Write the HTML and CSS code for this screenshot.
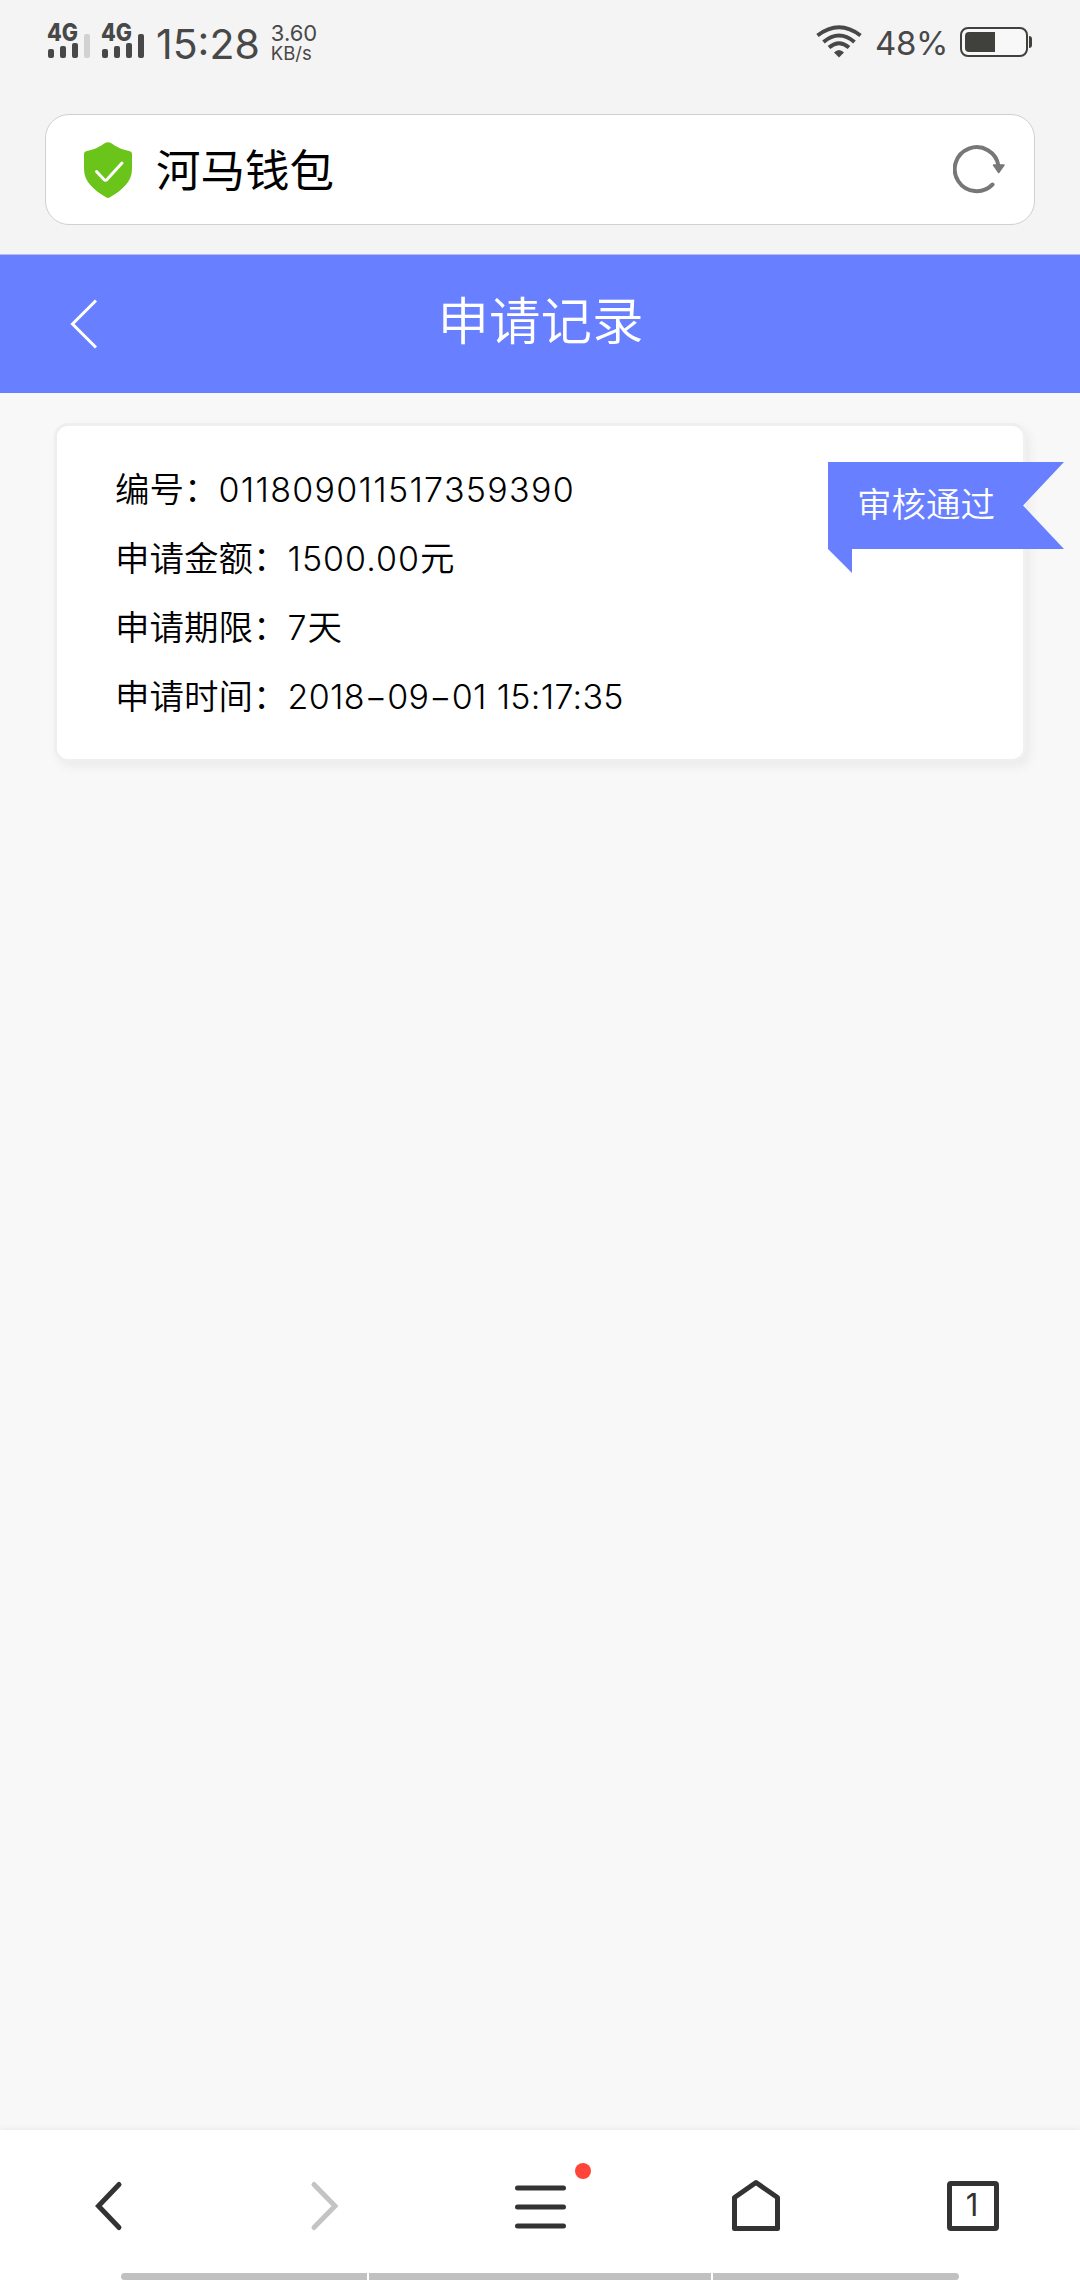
FILE: index.html
```html
<!DOCTYPE html>
<html lang="zh-CN">
<head>
    <meta charset="UTF-8">
    <meta name="viewport" content="width=device-width, initial-scale=1.0">
    <title>申请记录</title>
    <link rel="stylesheet" href="styles.css">
</head>
<body>
    <div class="page">
        <div class="status">
            <svg class="signal" width="100" height="60" viewBox="0 0 100 60">
                <g fill="#484848">
                    <rect x="0" y="49" width="6" height="9" rx="2"/>
                    <rect x="12" y="46" width="6" height="12" rx="2"/>
                    <rect x="24" y="43" width="6" height="15" rx="2"/>
                    <rect x="54" y="49" width="6" height="9" rx="2"/>
                    <rect x="66" y="46" width="6" height="12" rx="2"/>
                    <rect x="78" y="43" width="6" height="15" rx="2"/>
                    <rect x="90" y="34" width="6" height="24" rx="2"/>
                </g>
                <rect x="36" y="34" width="6" height="24" rx="2" fill="#d2d2d2"/>
                <text class="net" x="-1" y="41" textLength="31" lengthAdjust="spacingAndGlyphs">4G</text>
                <text class="net" x="53" y="41" textLength="31" lengthAdjust="spacingAndGlyphs">4G</text>
            </svg>
            <span class="time">15:28</span>
            <div class="speed">
                <span class="speed-num">3.60</span>
                <span class="speed-unit">KB/s</span>
            </div>
            <svg class="wifi" width="46" height="34" viewBox="0 0 46 34">
                <g fill="none" stroke="#484848" stroke-width="4">
                    <path d="M1.5 10.5Q23 -6 44.5 10.5"/>
                    <path d="M7.5 17Q23 4 38.500 17"/>
                    <path d="M13 22.500Q23 14 33 22.500"/>
                </g>
                <path d="M18 27.500Q23 22.500 28 27.500L23 32.500Z" fill="#484848"/>
            </svg>
            <span class="percent">48%</span>
            <svg class="battery" width="73" height="30" viewBox="0 0 73 30">
                <rect x="1" y="1" width="66" height="28" rx="7" fill="#f8f8f8" stroke="#40403c" stroke-width="2"/>
                <path d="M9 5H35V25H9Q5 25 5 21V9Q5 5 9 5Z" fill="#40403c"/>
                <path d="M69 9Q72 9 72 12V18Q72 21 69 21Z" fill="#40403c"/>
            </svg>
        </div>

        <div class="address">
            <svg width="48" height="56" viewBox="0 0 48 56">
                <path d="M21.500 .8Q24 -.5 26.500 .8C32 4.500 37 7.500 45 9Q48 9.500 48 12V27C48 40 38 48 26 55.300Q24 56.500 22 55.300C10 48 0 40 0 27V12Q0 9.500 3 9C11 7.500 16 4.500 21.500 .8Z" fill="#6ac419"/>
                <path d="M12.500 29.500L20 37.500Q21.500 39 23 37.500L38 21" fill="none" stroke="#fff" stroke-width="3" stroke-linecap="round"/>
            </svg>
            <span class="site">河马钱包</span>
            <svg class="refresh" width="52" height="50" viewBox="0 0 52 50">
                <path d="M39.500 39.500A22 22 0 1 1 45.500 21" fill="none" stroke="#777" stroke-width="4" stroke-linecap="round"/>
                <path d="M40.500 20H51L45.700 27.500Z" fill="#777" stroke="#777" stroke-width="1.500" stroke-linejoin="round"/>
            </svg>
        </div>

        <div class="header">
            <svg class="back" width="28" height="50" viewBox="0 0 28 50">
                <path d="M26 1.500L2.500 25L26 48.500" fill="none" stroke="#fff" stroke-width="3"/>
            </svg>
            <h1>申请记录</h1>
        </div>

        <div class="content">
            <div class="card">
                <p>编号：<span class="num no">011809011517359390</span></p>
                <p>申请金额：<span class="num">1500.00</span>元</p>
                <p>申请期限：<span class="num">7</span>天</p>
                <p>申请时间：<span class="num date">2018−09−01 15:17:35</span></p>
                <div class="badge">审核通过</div>
            </div>
        </div>

        <div class="nav">
            <svg width="60" height="60" viewBox="0 0 60 60">
                <path d="M41 8.500L20.500 30L41 51.500" fill="none" stroke="#333" stroke-width="5" stroke-linecap="round"/>
            </svg>
            <svg width="60" height="60" viewBox="0 0 60 60">
                <path d="M20 8.500L41 30L20 51.500" fill="none" stroke="#c4c4c4" stroke-width="5" stroke-linecap="round"/>
            </svg>
            <div class="menu">
                <svg width="60" height="60" viewBox="0 0 60 60">
                    <path d="M7.500 12H53.500M7.500 31H53.500M7.500 50H53.500" fill="none" stroke="#333" stroke-width="5" stroke-linecap="round"/>
                </svg>
                <span class="dot"></span>
            </div>
            <svg width="60" height="60" viewBox="0 0 60 60">
                <path d="M30 6.500L51.500 21.500V52.500H8.500V21.500Z" fill="none" stroke="#333" stroke-width="5" stroke-linejoin="round"/>
            </svg>
            <div class="tabs">1</div>
        </div>
        <div class="gesture"><i></i><i></i><i></i></div>
    </div>
</body>
</html>
```

FILE: styles.css
```css
body {
    margin: 0;
    font-family: "Inter", "Noto Sans CJK SC", sans-serif;
    color: #000;
    background-color: #f8f8f8;
}

svg {
    display: block;
}

.page {
    display: flex;
    flex-direction: column;
    height: 2280px;
    overflow: hidden;
}

.status {
    display: flex;
    height: 84px;
    padding: 0 47px 0 48px;
    color: #484848;
    background-color: #f4f4f4;
}

.signal {
    overflow: visible;
}

.net {
    font-size: 24px;
    font-weight: 800;
    fill: #484848;
}

.time {
    margin-left: 8px;
    line-height: 88px;
    font-size: 41px;
    font-weight: 400;
}

.speed {
    display: flex;
    flex-direction: column;
    margin-left: 11px;
    padding-top: 22px;
}

.speed-num {
    font-size: 22px;
    line-height: 22px;
}

.speed-unit {
    font-size: 18.500px;
    line-height: 19px;
}

.wifi {
    margin: 25px 13px 0 auto;
}

.percent {
    line-height: 87px;
    font-size: 33px;
    letter-spacing: -.4px;
    margin-right: 12px;
}

.battery {
    margin-top: 27px;
}

.address {
    display: flex;
    align-items: center;
    height: 109px;
    padding: 0 29px 0 38px;
    border: 1px solid #d0d0d0;
    border-radius: 24px;
    background-color: #fff;
    margin: 30px 45px 29px;
    box-shadow: 0 0 0 100px #f4f4f4;
    clip-path: inset(-30px -45px -29px -45px);
}

.site {
    margin: 3px 0 0 24px;
    font-size: 44.500px;
    line-height: 60px;
}

.refresh {
    margin-left: auto;
}

.header {
    display: flex;
    align-items: center;
    height: 138px;
    padding: 0 70px;
    border-top: 1px solid #b4bcec;
    color: #fff;
    background-color: #6880ff;
}

.back {
    margin-bottom: 1px;
}

h1 {
    flex: 1;
    margin: 0 27px 6px 0;
    text-align: center;
    font-size: 51.500px;
    font-weight: 350;
    line-height: 70px;
}

.content {
    flex: 1;
    padding: 30px 54px;
}

.card {
    position: relative;
    padding: 29px 58px 28px;
    border: 3px solid #efefef;
    border-right-color: #f1f1f1;
    border-radius: 14px;
    background-color: #fff;
    box-shadow: 4px 5px 10px #ebebeb;
}

.card p {
    margin: 0;
    height: 69px;
    line-height: 69px;
    font-size: 34.500px;
    font-weight: 350;
    white-space: nowrap;
}

.num {
    font-size: 34px;
    font-weight: 300;
    letter-spacing: 1px;
}

.no {
    letter-spacing: 1.3px;
}

.date {
    letter-spacing: .3px;
}

/* 状态角标 */
.badge {
    position: absolute;
    top: 36px;
    right: -41px;
    box-sizing: border-box;
    width: 236px;
    height: 111px;
    padding-left: 29px;
    line-height: 85px;
    font-size: 34.500px;
    font-weight: 350;
    color: #fff;
    background-color: #6880ff;
    clip-path: polygon(0 0, 100% 0, 195px 43.500px, 100% 87px, 24px 87px, 24px 100%, 0 87px);
}

.nav {
    display: grid;
    grid-template-columns: repeat(5, 1fr);
    place-items: center;
    box-sizing: border-box;
    height: 143px;
    padding-top: 8px;
    background-color: #fff;
    box-shadow: 0 0 6px #e4e4e4;
}

.menu {
    position: relative;
}

.dot {
    position: absolute;
    top: -13px;
    left: 65px;
    width: 16px;
    height: 16px;
    border-radius: 50%;
    background-color: #ff453a;
}

.tabs {
    box-sizing: border-box;
    width: 52px;
    height: 50px;
    margin-left: 2px;
    padding-right: 2px;
    border: 5px solid #333;
    border-radius: 4px;
    line-height: 38px;
    text-align: center;
    font-size: 31px;
    color: #333;
}

.gesture {
    position: relative;
    display: grid;
    grid-template-columns: 246px 342px 246px;
    justify-content: center;
    gap: 2px;
    height: 7px;
    background-color: #fff;
}

.gesture i {
    background-color: #c1c1c1;
}

.gesture i:first-child {
    border-radius: 4px 0 0 4px;
}

.gesture i:last-child {
    border-radius: 0 4px 4px 0;
}
```
